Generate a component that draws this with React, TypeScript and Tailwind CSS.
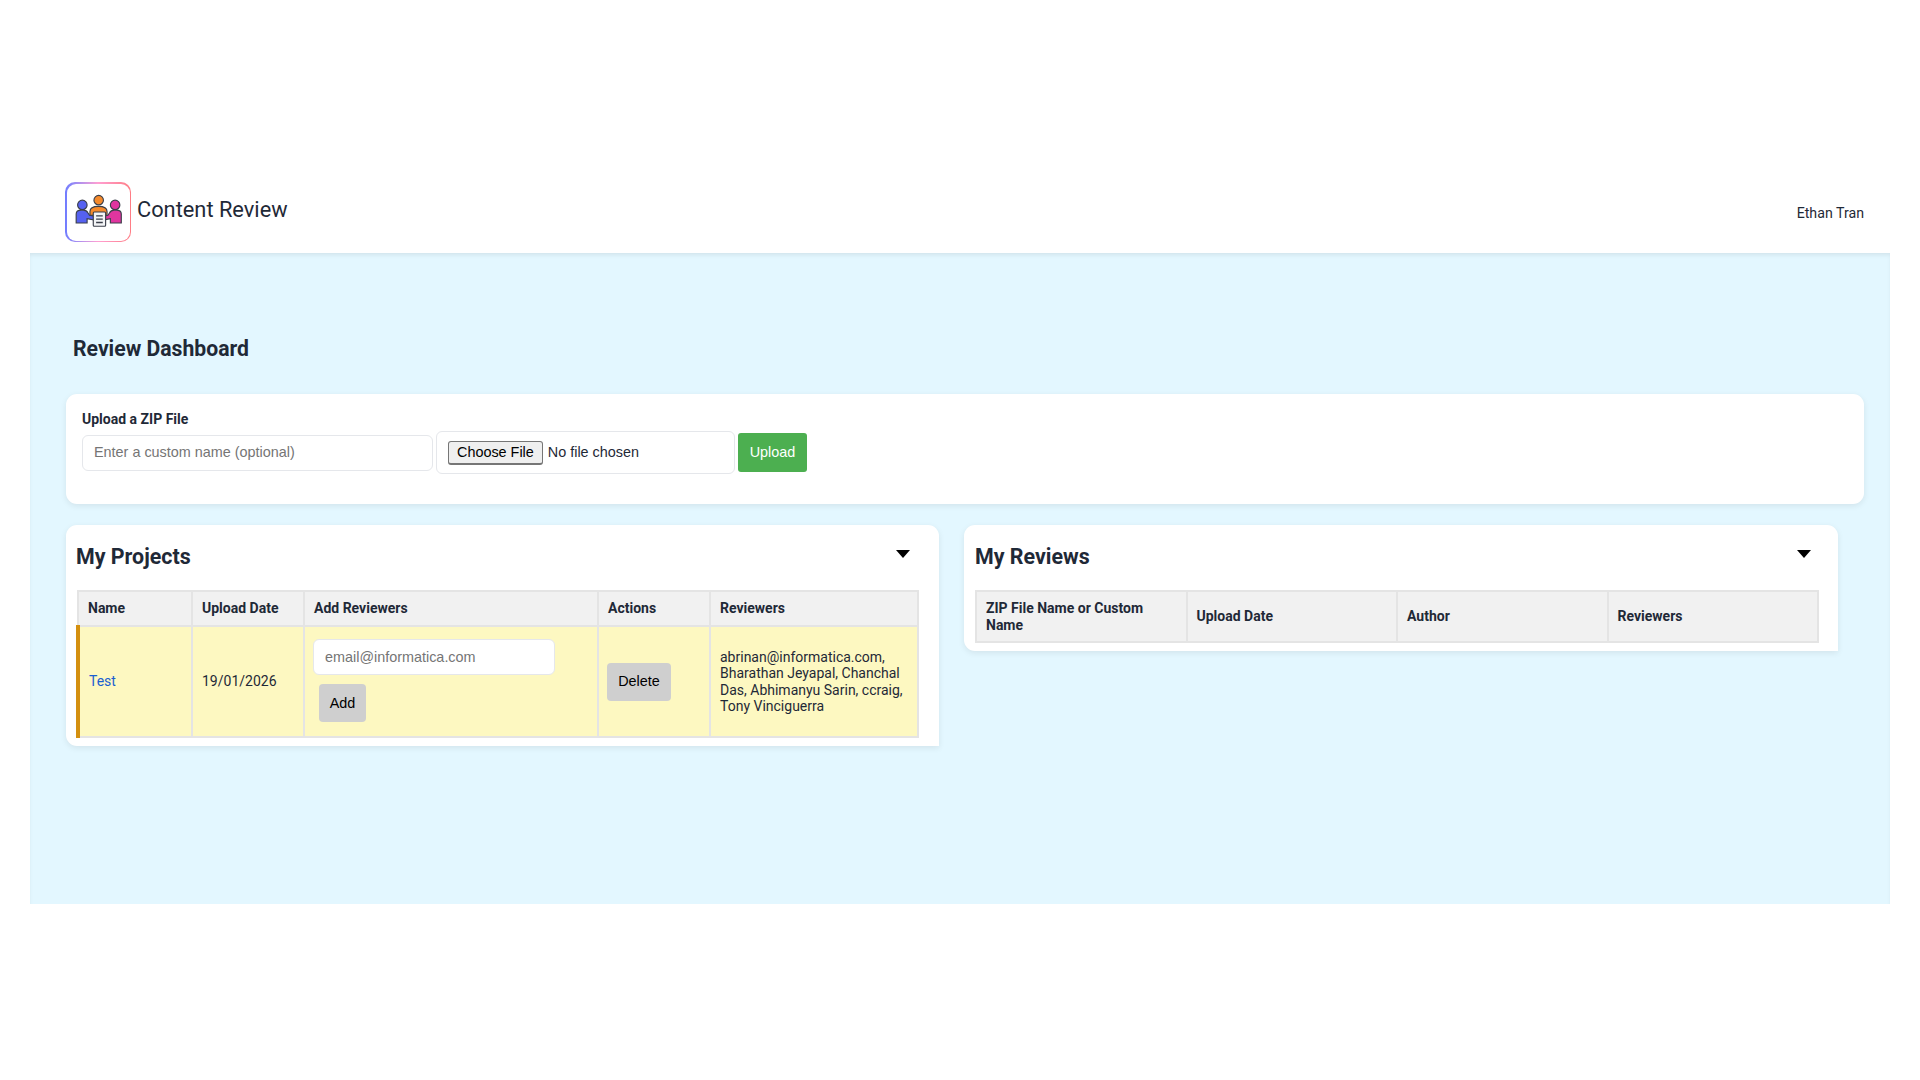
const sans = "font-['Roboto',sans-serif]";

function Logo() {
  return (
    <div className="h-[60px] w-[66px] shrink-0 rounded-[10px] bg-linear-to-r from-[#6f7cff] via-[#ff9fd2] to-[#ff7c84] p-[1.5px]">
      <div className="h-full w-full rounded-[9px] bg-white">
        <svg viewBox="0 0 66 60" className="h-full w-full" fill="none" stroke="#3b3f4a" strokeWidth="1.2">
          <path d="M24 33 V29 C24 25 27 23.5 33 23.5 C39 23.5 42 25 42 29 V33 Z" fill="#f58a2c" />
          <circle cx="33.2" cy="17" r="5" fill="#f58a2c" />
          <circle cx="16" cy="22" r="5" fill="#5561f0" />
          <circle cx="50.5" cy="22" r="5" fill="#e0359f" />
          <path d="M9.5 41 V31.5 C9.5 28.5 12 27.5 15 27.5 H17 C19.5 27.5 21 28.5 22 30.5 L23.5 33 L29 34 V38 L21 36.5 V41 Z" fill="#5561f0" />
          <path d="M57 41 V31.5 C57 28.5 54.5 27.5 51.5 27.5 H49.5 C47 27.5 45.5 28.5 44.5 30.5 L43 33 L38 34 V38 L45.5 36.5 V41 Z" fill="#e0359f" />
          <rect x="27.5" y="29.5" width="13" height="15" rx="1" fill="#f3f4f6" />
          <path d="M30.5 33.5 H37.5 M30.5 37 H37.5 M30.5 40.5 H37.5" strokeWidth="1.4" />
        </svg>
      </div>
    </div>
  );
}

function Caret() {
  return <div className="mt-[-6px] h-0 w-0 border-x-[7px] border-t-[8px] border-x-transparent border-t-black" />;
}

const th = "border-2 border-[#e4e4e4] bg-[#f1f1f1] px-[9px] text-left align-middle text-[14px] leading-[16.5px] font-bold text-[#1f2937]";
const td = "border-2 border-[#e4e4e4] bg-[#fdf8c1] px-[9px] text-[14px] leading-[16.5px] text-[#1f2937]";
const field = "rounded-[6px] border border-[#e5e7eb] bg-white px-[11px] pb-[1px] font-['Liberation_Sans',sans-serif] text-[14.4px] outline-none placeholder:text-[#757575]";
const grayButton = "rounded-[4px] bg-[#cfcfcf] font-['Liberation_Sans',sans-serif] text-[14.4px] text-black";

export default function App() {
  return (
    <div className={`h-[1080px] bg-white px-[30px] pt-[150px] ${sans}`}>
      <header className="flex h-[103px] items-start justify-between pr-[26px] pl-[35px] pt-[32px]">
        <div className="flex items-start gap-[6px]">
          <Logo />
          <span className="mt-[15px] text-[21.8px] leading-[26px] text-[#1f2937]">Content Review</span>
        </div>
        <span className="mt-[22px] text-[14.2px] leading-[18px] text-[#1f2937]">Ethan Tran</span>
      </header>

      <main className="h-[651px] bg-[#e3f7ff] pr-[26px] pl-[36px] shadow-[inset_0_3px_4px_-1px_rgba(0,0,0,0.08)]">
        <h1 className="pt-[83px] pl-[7px] text-[21.2px] leading-[26px] font-bold text-[#1f2937]">Review Dashboard</h1>

        <section className="mt-[32px] h-[110px] rounded-[11px] bg-white px-[16px] pt-[16px] shadow-[0_2px_6px_rgba(0,0,0,0.08)]">
          <label className="block text-[14px] leading-[18px] font-bold text-[#1f2937]">Upload a ZIP File</label>
          <div className="mt-[3px] flex items-center gap-[3px]">
            <input placeholder="Enter a custom name (optional)" className={`h-[36px] w-[351px] ${field}`} />
            <input
              type="file"
              className="h-[43px] w-[299px] rounded-[6px] border border-[#e5e7eb] bg-white py-[9px] pl-[11px] font-['Liberation_Sans',sans-serif] text-[14.4px] text-[#1f2937] file:mr-[5px] file:h-[24px] file:rounded-[3px] file:border file:border-b-2 file:border-[#767676] file:bg-[#efefef] file:px-[8px] file:text-black"
            />
            <button className="h-[39px] w-[69px] rounded-[3px] bg-[#4caf50] font-['Liberation_Sans',sans-serif] text-[14.4px] text-white">Upload</button>
          </div>
        </section>

        <div className="mt-[21px] flex items-start">
          <section className="h-[221px] w-[873px] rounded-[11px] rounded-br-none bg-white pr-[11px] pl-[10px] shadow-[0_2px_6px_rgba(0,0,0,0.08)]">
            <div className="flex h-[65px] items-center justify-between pr-[18px] pb-[2px]">
              <h2 className="text-[21.4px] leading-[26px] font-bold text-[#1f2937]">My Projects</h2>
              <Caret />
            </div>
            <table className="w-[843px] table-fixed border-collapse">
              <colgroup>
                <col className="w-[114px]" />
                <col className="w-[112px]" />
                <col className="w-[294px]" />
                <col className="w-[112px]" />
                <col />
              </colgroup>
              <thead>
                <tr className="h-[35px]">
                  <th className={th}>Name</th>
                  <th className={th}>Upload Date</th>
                  <th className={th}>Add Reviewers</th>
                  <th className={th}>Actions</th>
                  <th className={th}>Reviewers</th>
                </tr>
              </thead>
              <tbody>
                <tr className="h-[111px]">
                  <td className={`${td} border-l-[4px] border-l-[#d4900f]`}>
                    <a href="#" className="text-[#1a5fd0]">Test</a>
                  </td>
                  <td className={td}>19/01/2026</td>
                  <td className={`${td} pb-[2px]`}>
                    <input placeholder="email@informatica.com" className={`ml-[-1px] block h-[36px] w-[242px] ${field}`} />
                    <button className={`mt-[9px] ml-[5px] block h-[38px] w-[47px] ${grayButton}`}>Add</button>
                  </td>
                  <td className={td}>
                    <button className={`ml-[-1px] block h-[38px] w-[64px] ${grayButton}`}>Delete</button>
                  </td>
                  <td className={td}>abrinan@informatica.com, Bharathan Jeyapal, Chanchal Das, Abhimanyu Sarin, ccraig, Tony Vinciguerra</td>
                </tr>
              </tbody>
            </table>
          </section>

          <section className="ml-[25px] h-[126px] w-[874px] rounded-[11px] rounded-br-none bg-white pr-[11px] pl-[11px] shadow-[0_2px_6px_rgba(0,0,0,0.08)]">
            <div className="flex h-[65px] items-center justify-between pr-[16px] pb-[2px]">
              <h2 className="text-[21.4px] leading-[26px] font-bold text-[#1f2937]">My Reviews</h2>
              <Caret />
            </div>
            <table className="w-[844px] table-fixed border-collapse">
              <thead>
                <tr className="h-[51px]">
                  <th className={th}>ZIP File Name or Custom Name</th>
                  <th className={th}>Upload Date</th>
                  <th className={th}>Author</th>
                  <th className={th}>Reviewers</th>
                </tr>
              </thead>
            </table>
          </section>
        </div>
      </main>
    </div>
  );
}
